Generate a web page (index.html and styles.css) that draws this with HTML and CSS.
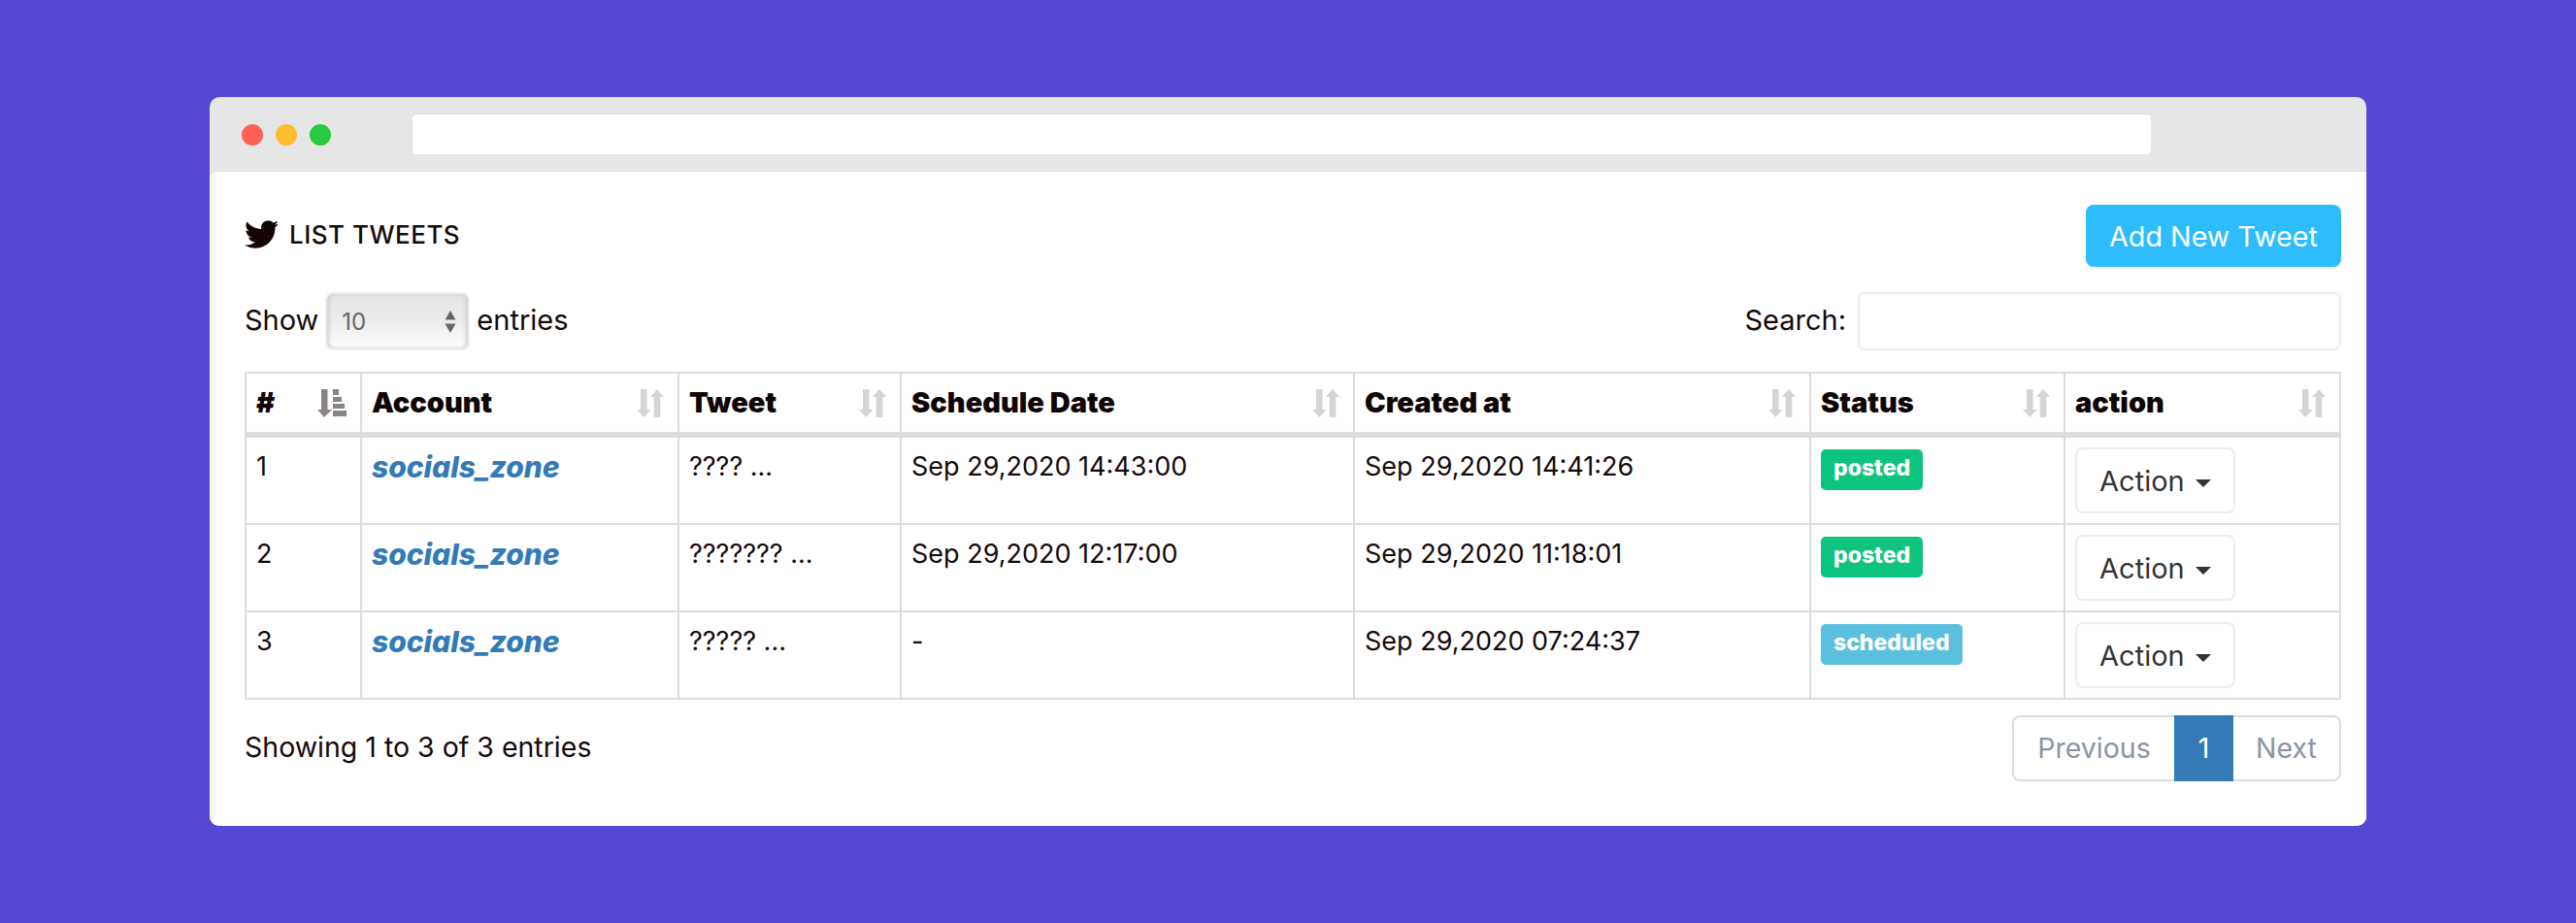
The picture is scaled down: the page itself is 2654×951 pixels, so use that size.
FILE: index.html
```html
<!DOCTYPE html>
<html lang="en">
<head>
  <meta charset="UTF-8" />
  <title>List Tweets</title>
  <link rel="stylesheet" href="styles.css">
</head>
<body>
  <div class="window">
    <div class="titlebar">
      <span class="dot dot-red"></span>
      <span class="dot dot-yellow"></span>
      <span class="dot dot-green"></span>
      <div class="address"></div>
    </div>
    <div class="content">
      <div class="page-head">
        <h1 class="page-title">
          <svg class="bird" viewBox="0 0 512 512"><path d="M459.37 151.716c.325 4.548.325 9.097.325 13.645 0 138.72-105.583 298.558-298.558 298.558-59.452 0-114.68-17.219-161.137-47.106 8.447.974 16.568 1.299 25.34 1.299 49.055 0 94.213-16.568 130.274-44.832-46.132-.975-84.792-31.188-98.112-72.772 6.498.974 12.995 1.624 19.818 1.624 9.421 0 18.843-1.3 27.614-3.573-48.081-9.747-84.143-51.98-84.143-102.985v-1.299c13.969 7.797 30.214 12.67 47.431 13.319-28.264-18.843-46.781-51.005-46.781-87.391 0-19.492 5.197-37.36 14.294-52.954 51.655 63.675 129.3 105.258 216.365 109.807-1.624-7.797-2.599-15.918-2.599-24.04 0-57.828 46.782-104.934 104.934-104.934 30.213 0 57.502 12.67 76.67 33.137 23.715-4.548 46.456-13.645 66.599-25.89-7.798 24.366-24.366 44.833-46.132 57.828 21.117-2.273 41.584-8.122 60.426-16.243-14.292 20.791-32.161 39.308-52.628 54.253z"/></svg>
          LIST TWEETS
        </h1>
        <button class="btn-add">Add New Tweet</button>
      </div>

      <div class="controls">
        <label class="length">
          Show
          <span class="select-wrap">
            <select><option>10</option><option>25</option><option>50</option></select>
            <svg class="select-arrows" viewBox="0 0 12 23"><path d="M6 0l5.500 9.500H.5zM6 23L.5 13.500h11z"/></svg>
          </span>
          entries
        </label>
        <label class="search">
          Search:
          <input type="text">
        </label>
      </div>

      <table class="tweets">
        <colgroup>
          <col class="c-num"><col class="c-account"><col class="c-tweet"><col class="c-sched"><col class="c-created"><col class="c-status"><col class="c-action">
        </colgroup>
        <thead>
          <tr>
            <th><div class="th-in">#
              <svg class="sort sort-active" viewBox="0 0 30 29"><path d="M4 0h6.500v21H15l-8 8-7-8h4zM16 0h6v6h-6zM16 8h9v5h-9zM16 15h12v5H16zM16 22h14v6H16z"/></svg>
            </div></th>
            <th><div class="th-in">Account
              <svg class="sort" viewBox="0 0 28 29"><path d="M4 0h6.500v21h4l-7.200 8L0 21h4zM21 0l7 8h-3.700v21h-6.600V8H14z"/></svg>
            </div></th>
            <th><div class="th-in">Tweet
              <svg class="sort" viewBox="0 0 28 29"><path d="M4 0h6.500v21h4l-7.200 8L0 21h4zM21 0l7 8h-3.700v21h-6.600V8H14z"/></svg>
            </div></th>
            <th><div class="th-in">Schedule Date
              <svg class="sort" viewBox="0 0 28 29"><path d="M4 0h6.500v21h4l-7.200 8L0 21h4zM21 0l7 8h-3.700v21h-6.600V8H14z"/></svg>
            </div></th>
            <th><div class="th-in">Created at
              <svg class="sort" viewBox="0 0 28 29"><path d="M4 0h6.500v21h4l-7.200 8L0 21h4zM21 0l7 8h-3.700v21h-6.600V8H14z"/></svg>
            </div></th>
            <th><div class="th-in">Status
              <svg class="sort" viewBox="0 0 28 29"><path d="M4 0h6.500v21h4l-7.200 8L0 21h4zM21 0l7 8h-3.700v21h-6.600V8H14z"/></svg>
            </div></th>
            <th><div class="th-in">action
              <svg class="sort" viewBox="0 0 28 29"><path d="M4 0h6.500v21h4l-7.200 8L0 21h4zM21 0l7 8h-3.700v21h-6.600V8H14z"/></svg>
            </div></th>
          </tr>
        </thead>
        <tbody>
          <tr>
            <td>1</td>
            <td><a class="account" href="#">socials_zone</a></td>
            <td>???? ...</td>
            <td>Sep 29,2020 14:43:00</td>
            <td>Sep 29,2020 14:41:26</td>
            <td><span class="badge badge-posted">posted</span></td>
            <td><button class="btn-action">Action <span class="caret"></span></button></td>
          </tr>
          <tr>
            <td>2</td>
            <td><a class="account" href="#">socials_zone</a></td>
            <td>??????? ...</td>
            <td>Sep 29,2020 12:17:00</td>
            <td>Sep 29,2020 11:18:01</td>
            <td><span class="badge badge-posted">posted</span></td>
            <td><button class="btn-action">Action <span class="caret"></span></button></td>
          </tr>
          <tr>
            <td>3</td>
            <td><a class="account" href="#">socials_zone</a></td>
            <td>????? ...</td>
            <td>-</td>
            <td>Sep 29,2020 07:24:37</td>
            <td><span class="badge badge-scheduled">scheduled</span></td>
            <td><button class="btn-action">Action <span class="caret"></span></button></td>
          </tr>
        </tbody>
      </table>

      <div class="table-foot">
        <div class="info">Showing 1 to 3 of 3 entries</div>
        <div class="pagination">
          <a class="page page-prev" href="#">Previous</a>
          <a class="page page-current" href="#">1</a>
          <a class="page page-next" href="#">Next</a>
        </div>
      </div>
    </div>
  </div>
</body>
</html>
```

FILE: styles.css
```css
html, body {
  margin: 0;
  padding: 0;
}
body {
  background: #5548d4;
  padding: 100px 216px;
  font-family: Inter, "Liberation Sans", sans-serif;
  font-size: 27px;
  line-height: 40px;
  color: #150a0a;
  box-sizing: border-box;
  height: 951px;
  overflow: hidden;
}
.window {
  height: 751px;
  background: #e6e6e6;
  border-radius: 10px;
  overflow: hidden;
  display: flex;
  flex-direction: column;
}
.titlebar {
  height: 77px;
  flex: none;
  display: flex;
  align-items: center;
  padding: 0 0 0 33px;
  gap: 13px;
  box-sizing: border-box;
}
.dot {
  width: 22px;
  height: 22px;
  border-radius: 50%;
}
.dot-red { background: #ff5f57; }
.dot-yellow { background: #febc2e; }
.dot-green { background: #28c840; }
.address {
  width: 1791px;
  height: 42px;
  margin-left: 71px;
  margin-top: -1px;
  background: #fff;
  border-top: 1px solid #d8d8d8;
  border-radius: 4px;
  box-sizing: border-box;
}
.content {
  flex: 1;
  background: #fff;
  border-left: 6px solid #f6f8fb;
  border-radius: 6px 0 0 0;
  padding: 34px 26px 0 30px;
}

.page-head {
  display: flex;
  justify-content: space-between;
  align-items: center;
}
.page-title {
  margin: -3px 0 0;
  display: flex;
  align-items: center;
  gap: 11px;
  font-size: 26px;
  font-weight: 500;
  letter-spacing: 0.5px;
}
.bird {
  width: 35px;
  height: 35px;
  fill: #150505;
}
.btn-add {
  width: 263px;
  height: 64px;
  background: #2dbdff;
  color: #fff;
  border: none;
  border-radius: 8px;
  font-family: inherit;
  font-size: 28.700px;
}

.controls {
  display: flex;
  justify-content: space-between;
  margin-top: 26px;
  height: 60px;
  font-size: 29px;
}
.length, .search {
  display: flex;
  align-items: center;
  gap: 7px;
  margin-top: -2px;
}
.search { gap: 12px; }
.select-wrap {
  position: relative;
  display: block;
  margin-top: 2px;
}
.select-wrap select {
  display: block;
  width: 149px;
  height: 60px;
  appearance: none;
  border: 2px solid #eee;
  border-radius: 8px;
  padding-left: 15px;
  background: linear-gradient(#e4e4e4, #ededed 55%, #fff);
  box-shadow: inset 3px 0 4px -1px #ccc, inset -3px 0 4px -1px #ccc;
  font-family: inherit;
  font-size: 24px;
  color: #666;
}
.select-arrows {
  position: absolute;
  right: 14px;
  top: 19px;
  width: 12px;
  height: 23px;
  fill: #666;
}
.search input {
  width: 498px;
  height: 60px;
  margin-top: 2px;
  border: 2px solid #eee;
  border-radius: 7px;
  box-sizing: border-box;
  background: #fff;
}

.tweets {
  margin-top: 22px;
  width: 2158px;
  table-layout: fixed;
  border-collapse: collapse;
  border: 2px solid #ddd;
}
.c-num { width: 119px; }
.c-account { width: 327px; }
.c-tweet { width: 229px; }
.c-sched { width: 467px; }
.c-created { width: 470px; }
.c-status { width: 262px; }
.c-action { width: 284px; }
.tweets th, .tweets td {
  border: 2px solid #ddd;
  padding: 10px;
  text-align: left;
  vertical-align: top;
  height: 40px;
}
.tweets thead th {
  border-bottom-width: 6px;
  font-size: 29px;
  font-weight: 900;
  color: #0f0505;
}
.tweets tbody td {
  height: 68px;
}
.th-in {
  display: flex;
  justify-content: space-between;
  align-items: center;
  height: 40px;
  padding-right: 4px;
}
.sort {
  height: 29px;
  width: 28px;
  fill: #d5d5d5;
}
.sort-active {
  width: 30px;
  fill: #8a8585;
}
.account {
  color: #337ab7;
  font-size: 30px;
  font-weight: 800;
  font-style: italic;
  text-decoration: none;
}
.badge {
  display: block;
  width: fit-content;
  height: 42px;
  margin-top: 2px;
  padding: 0 13px;
  border-radius: 5px;
  color: #fff;
  font-size: 23px;
  font-weight: 800;
  line-height: 38px;
}
.badge-posted { background: #0dc47f; }
.badge-scheduled { background: #5bc0de; }
.btn-action {
  display: block;
  width: 165px;
  height: 68px;
  background: #fff;
  border: 2px solid #eee;
  border-radius: 8px;
  color: #333;
  font-family: inherit;
  font-size: 29px;
}
.caret {
  display: inline-block;
  margin-left: 3px;
  vertical-align: middle;
  border-top: 8px solid #333;
  border-left: 8px solid transparent;
  border-right: 8px solid transparent;
}

.table-foot {
  display: flex;
  justify-content: space-between;
  margin-top: 16px;
}
.info {
  margin-top: 13px;
  font-size: 28.500px;
}
.pagination {
  display: flex;
  height: 68px;
}
.page {
  display: flex;
  align-items: center;
  justify-content: center;
  box-sizing: border-box;
  border: 2px solid #ddd;
  color: #8a96a3;
  text-decoration: none;
  font-size: 28.500px;
}
.page-prev {
  width: 167px;
  border-right: none;
  border-radius: 8px 0 0 8px;
}
.page-current {
  width: 61px;
  background: #337ab7;
  border-color: #337ab7;
  color: #fff;
}
.page-next {
  width: 111px;
  border-left: none;
  border-radius: 0 8px 8px 0;
}
```
